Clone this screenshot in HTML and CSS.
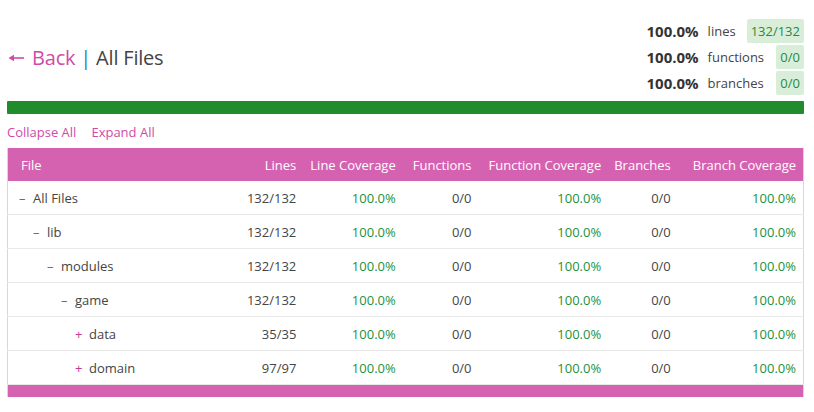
FILE: index.html
```html
<!DOCTYPE html>
<html>
<head>
<meta charset="utf-8">
<link rel="stylesheet" href="styles.css">
</head>
<body>
<div class="page">
  <header class="top">
    <h1 class="title"><a class="back" href="#"><svg class="arrow" width="16" height="10" viewBox="0 0 16 10"><path d="M16 5H3" stroke="#d14aa8" stroke-width="1.6" fill="none"/><path d="M0.5 5L6 1.8V8.2Z" fill="#d14aa8"/></svg> Back</a> <span class="sep">|</span> All Files</h1>
    <div class="summary">
      <span class="pct">100.0%</span><div class="item"><span class="lbl">lines</span><span class="badge">132/132</span></div>
      <span class="pct">100.0%</span><div class="item"><span class="lbl">functions</span><span class="badge">0/0</span></div>
      <span class="pct">100.0%</span><div class="item"><span class="lbl">branches</span><span class="badge">0/0</span></div>
    </div>
  </header>
  <div class="bar"></div>
  <div class="actions"><a href="#">Collapse All</a><a href="#">Expand All</a></div>
  <table class="cov">
    <thead>
      <tr>
        <th class="file">File</th>
        <th class="ln">Lines</th>
        <th>Line Coverage</th>
        <th>Functions</th>
        <th>Function Coverage</th>
        <th class="br">Branches</th>
        <th class="bc">Branch Coverage</th>
      </tr>
    </thead>
    <tbody>
      <tr>
        <td class="file l0"><span class="tog">–</span>All Files</td>
        <td class="ln">132/132</td><td class="ok">100.0%</td><td>0/0</td><td class="ok">100.0%</td><td class="br">0/0</td><td class="ok bc">100.0%</td>
      </tr>
      <tr>
        <td class="file l1"><span class="tog">–</span>lib</td>
        <td class="ln">132/132</td><td class="ok">100.0%</td><td>0/0</td><td class="ok">100.0%</td><td class="br">0/0</td><td class="ok bc">100.0%</td>
      </tr>
      <tr>
        <td class="file l2"><span class="tog">–</span>modules</td>
        <td class="ln">132/132</td><td class="ok">100.0%</td><td>0/0</td><td class="ok">100.0%</td><td class="br">0/0</td><td class="ok bc">100.0%</td>
      </tr>
      <tr>
        <td class="file l3"><span class="tog">–</span>game</td>
        <td class="ln">132/132</td><td class="ok">100.0%</td><td>0/0</td><td class="ok">100.0%</td><td class="br">0/0</td><td class="ok bc">100.0%</td>
      </tr>
      <tr>
        <td class="file l4"><span class="tog">+</span>data</td>
        <td class="ln">35/35</td><td class="ok">100.0%</td><td>0/0</td><td class="ok">100.0%</td><td class="br">0/0</td><td class="ok bc">100.0%</td>
      </tr>
      <tr>
        <td class="file l4"><span class="tog">+</span>domain</td>
        <td class="ln">97/97</td><td class="ok">100.0%</td><td>0/0</td><td class="ok">100.0%</td><td class="br">0/0</td><td class="ok bc">100.0%</td>
      </tr>
    </tbody>
    <tfoot>
      <tr><td colspan="7"></td></tr>
    </tfoot>
  </table>
</div>
</body>
</html>
```

FILE: styles.css
```css
html, body {
  margin: 0;
  padding: 0;
  background: #fff;
}
body {
  font-family: "Open Sans", "Noto Sans", sans-serif;
  font-size: 13px;
  color: #444;
}
.page {
  padding: 19px 10px 0 7px;
}
.top {
  display: flex;
  justify-content: space-between;
  align-items: center;
  height: 76px;
}
.title {
  margin: 0;
  font-weight: normal;
  font-size: 20px;
  color: #444;
  letter-spacing: -0.2px;
}
.back {
  color: #d14aa8;
  text-decoration: none;
}
.arrow {
  margin-left: 1px;
  margin-right: 3px;
  vertical-align: 2px;
}
.sep {
  color: #1c7fc9;
}
.summary {
  display: grid;
  grid-template-columns: auto auto;
  row-gap: 2px;
  column-gap: 9px;
  align-items: center;
}
.pct {
  font-weight: bold;
  font-size: 15px;
  color: #333;
  text-align: right;
}
.item {
  display: flex;
  justify-content: space-between;
  align-items: center;
  gap: 11px;
  height: 24px;
}
.lbl {
  color: #444;
}
.badge {
  background: #d9eed9;
  color: #2a8a3a;
  border-radius: 2px;
  padding: 0 4px;
  line-height: 24px;
  height: 24px;
}
.bar {
  margin-top: 6px;
  height: 13px;
  background: #228b2c;
  border-radius: 1px;
}
.actions {
  display: flex;
  gap: 15px;
  margin-top: 8px;
  height: 20px;
  align-items: center;
}
.actions a {
  color: #d14aa8;
  text-decoration: none;
  font-size: 13px;
}
.cov {
  margin-top: 6px;
  width: 100%;
  border-collapse: collapse;
  border-left: 1px solid #efc8e3;
  border-right: 1px solid #efc8e3;
}
.cov th {
  background: #d562b0;
  color: #fff;
  font-weight: normal;
  height: 33px;
  padding: 0 7px 0 10px;
  text-align: right;
  white-space: nowrap;
  box-sizing: border-box;
}
.cov th.file {
  text-align: left;
  padding-left: 13px;
}
.cov td {
  height: 33px;
  border-bottom: 1px solid #e8e8e8;
  padding: 0 7px 0 10px;
  text-align: right;
  color: #444;
  white-space: nowrap;
}
.cov .ln {
  padding-right: 4px;
}
.cov .br {
  padding-left: 6px;
}
.cov .bc {
  padding-left: 15px;
}
.cov td.file {
  text-align: left;
  width: 100%;
}
.cov td.ok {
  color: #24913c;
}
.tog {
  display: inline-block;
  width: 14px;
  color: #c7369e;
}
.l0 { padding-left: 11px !important; }
.l1 { padding-left: 25px !important; }
.l2 { padding-left: 39px !important; }
.l3 { padding-left: 53px !important; }
.l4 { padding-left: 67px !important; }
.cov tfoot td {
  background: #d562b0;
  height: 12px;
  padding: 0;
  border: none;
}
```
